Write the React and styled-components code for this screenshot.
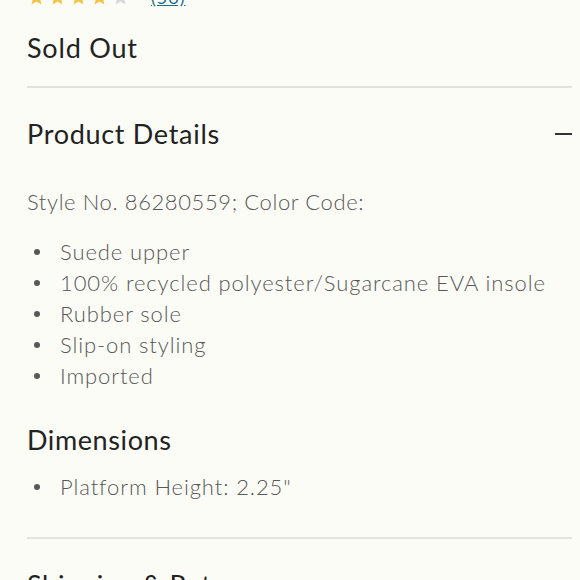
import React from "react";
import styled, { createGlobalStyle } from "styled-components";

const Global = createGlobalStyle`
  html, body { margin: 0; padding: 0; background: #fcfcf7; }
  body { font-family: Lato, "Noto Sans", sans-serif; overflow: hidden; }
`;

const Page = styled.div`
  width: 580px;
  height: 580px;
  overflow: hidden;
  padding: 0 8px 0 27px;
  box-sizing: border-box;
  background: #fcfcf7;
`;

const RatingRow = styled.div`
  display: flex;
  align-items: center;
  gap: 21px;
  margin-top: -12px;
  height: 18px;
`;

const Stars = styled.div`
  display: flex;
  gap: 2px;
`;

const ReviewLink = styled.a`
  font-size: 18px;
  color: #1f6f86;
  text-decoration: underline;
  letter-spacing: 1px;
`;

const SoldOut = styled.div`
  font-size: 27px;
  color: #222;
  letter-spacing: 0.8px;
  margin-top: 24px;
  line-height: 36px;
`;

const Divider = styled.hr`
  border: none;
  border-top: 2px solid #e2e2de;
  margin: ${(p) => p.$mt || 0}px 0 0;
`;

const SectionHeader = styled.div`
  display: flex;
  justify-content: space-between;
  align-items: center;
  margin-top: 27px;
  height: 36px;
`;

const SectionTitle = styled.h2`
  margin: 0;
  font-weight: 400;
  font-size: 27px;
  letter-spacing: 0.7px;
  color: #222;
`;

const Minus = styled.span`
  display: block;
  width: 17px;
  height: 2px;
  background: #333;
  margin-top: 2px;
`;

const Body = styled.p`
  margin: 35px 0 0;
  font-size: 22px;
  font-weight: 300;
  line-height: 31px;
  letter-spacing: 0.6px;
  color: #585858;
`;

const List = styled.ul`
  margin: ${(p) => p.$mt}px 0 0;
  padding: 0;
  list-style: none;
`;

const Item = styled.li`
  display: flex;
  align-items: center;
  font-size: 22px;
  font-weight: 300;
  line-height: 31px;
  letter-spacing: 0.9px;
  color: #585858;
  &::before {
    content: "";
    width: 6px;
    height: 6px;
    border-radius: 50%;
    background: #585858;
    margin: 0 20px 0 7px;
    flex: none;
  }
`;

const SubTitle = styled.h3`
  margin: 33px 0 0;
  font-weight: 400;
  font-size: 27px;
  letter-spacing: 0.6px;
  color: #222;
  line-height: 32px;
`;

const Star = ({ fill }) => (
  <svg width="19" height="19" viewBox="0 0 24 24">
    <path
      d="M12 2l2.9 6.6 7.1.6-5.4 4.7 1.6 7-6.2-3.7-6.2 3.7 1.6-7L2 9.2l7.1-.6z"
      fill={fill}
    />
  </svg>
);

export default function App() {
  return (
    <Page>
      <Global />
      <RatingRow>
        <Stars>
          <Star fill="#f5c445" />
          <Star fill="#f5c445" />
          <Star fill="#f5c445" />
          <Star fill="#f5c445" />
          <Star fill="#d8d8d8" />
        </Stars>
        <ReviewLink href="#">(56)</ReviewLink>
      </RatingRow>
      <SoldOut>Sold Out</SoldOut>
      <Divider $mt={20} />
      <SectionHeader>
        <SectionTitle>Product Details</SectionTitle>
        <Minus />
      </SectionHeader>
      <Body>Style No. 86280559; Color Code:</Body>
      <List $mt={19}>
        <Item>Suede upper</Item>
        <Item>100% recycled polyester/Sugarcane EVA insole</Item>
        <Item>Rubber sole</Item>
        <Item>Slip-on styling</Item>
        <Item>Imported</Item>
      </List>
      <SubTitle>Dimensions</SubTitle>
      <List $mt={15}>
        <Item>Platform Height: 2.25"</Item>
      </List>
      <Divider $mt={35} />
      <SectionHeader>
        <SectionTitle>Shipping &amp; Returns</SectionTitle>
      </SectionHeader>
    </Page>
  );
}
